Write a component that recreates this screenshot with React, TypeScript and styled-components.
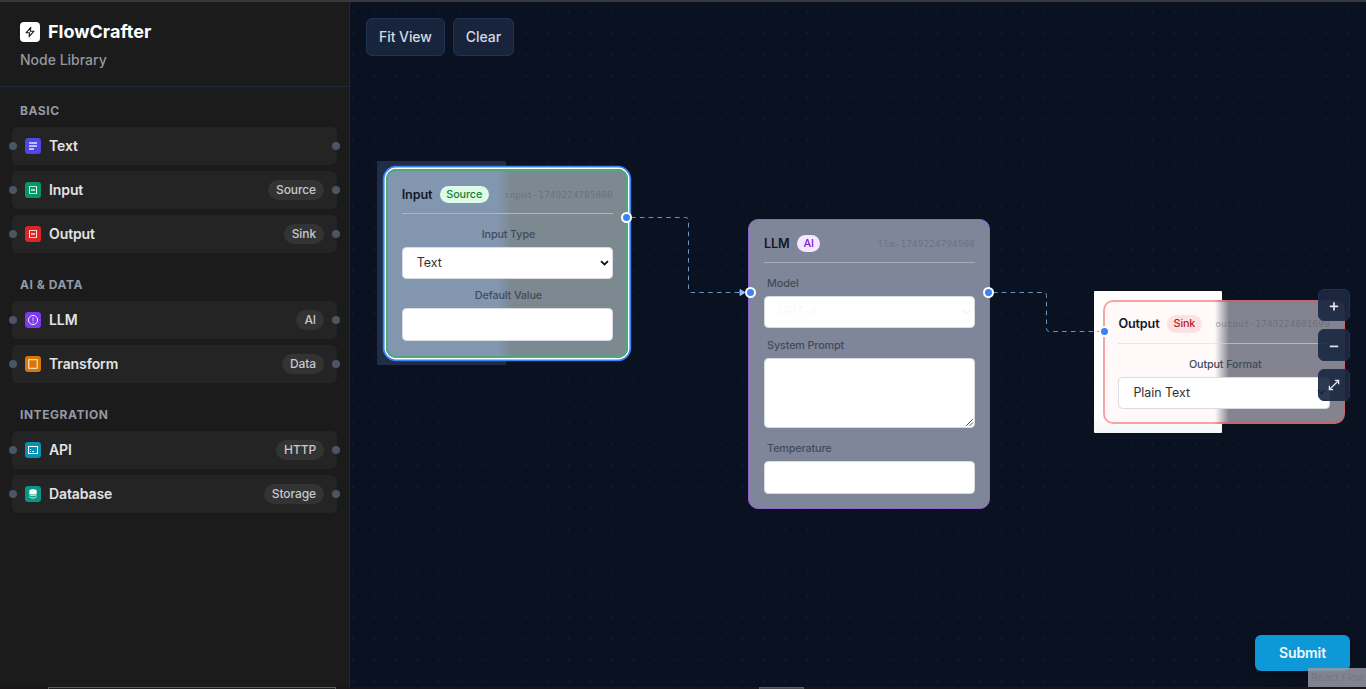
import React from 'react';
import styled, { createGlobalStyle, css } from 'styled-components';

const GlobalStyle = createGlobalStyle`
  * { box-sizing: border-box; }
  body { margin: 0; background: #0a1120; font-family: Inter, "Liberation Sans", sans-serif; overflow: hidden; }
`;

const Page = styled.div`
  position: relative;
  display: flex;
  height: 689px;
  width: 1366px;
  overflow: hidden;
  border-top: 2px solid #38373c;
`;

const Sidebar = styled.aside`
  width: 350px;
  flex: none;
  background: #1b1b1b;
  border-right: 1px solid #1e293b;
`;

const Brand = styled.header`
  height: 85px;
  padding: 20px 20px 0;
  border-bottom: 1px solid #1e293b;
`;

const BrandRow = styled.div`
  display: flex;
  align-items: center;
  gap: 8px;
  height: 20px;
`;

const Logo = styled.span`
  display: grid;
  place-items: center;
  width: 20px;
  height: 20px;
  border-radius: 4px;
  background: #fff;
`;

const Title = styled.h1`
  margin: 0;
  color: #fff;
  font-size: 18px;
  font-weight: 700;
  line-height: 20px;
`;

const Subtitle = styled.div`
  margin-top: 8px;
  color: #94979f;
  font-size: 14px;
  font-weight: 500;
  line-height: 20px;
`;

const Group = styled.section`
  padding: 14px 12px 0;
  & + & { padding-top: 22px; }
`;

const GroupTitle = styled.h2`
  margin: 0 0 6px 8px;
  color: #9499a4;
  font-size: 12px;
  font-weight: 700;
  line-height: 20px;
  letter-spacing: 0.55px;
`;

const Item = styled.div`
  position: relative;
  display: flex;
  align-items: center;
  height: 38px;
  padding: 0 13px;
  border-radius: 6px;
  background: #242424;
  & + & { margin-top: 6px; }
  &::before, &::after {
    content: '';
    position: absolute;
    top: 15px;
    width: 8px;
    height: 8px;
    border-radius: 50%;
    background: #4b5563;
  }
  &::before { left: -3px; }
  &::after { right: -3px; }
`;

const ItemIcon = styled.span<{ $color: string }>`
  width: 16px;
  height: 16px;
  border-radius: 3px;
  background: ${(p) => p.$color};
  svg { display: block; }
`;

const ItemName = styled.span`
  flex: 1;
  margin-left: 8px;
  padding-bottom: 2px;
  color: #e3e3e5;
  font-size: 14px;
  font-weight: 600;
  letter-spacing: -0.1px;
`;

const Tag = styled.span`
  padding: 0 8px;
  border-radius: 10px;
  background: #333;
  color: #c6c8cc;
  font-size: 12px;
  font-weight: 500;
  line-height: 20px;
  letter-spacing: -0.1px;
`;

const Canvas = styled.main`
  position: relative;
  flex: 1;
  background-color: #0a1120;
  background-image: radial-gradient(circle at 50% 50%, #122032 0.6px, transparent 1px);
  background-size: 21.63px 21.63px;
  background-position: -8px -1.6px;
`;

const Toolbar = styled.div`
  display: flex;
  gap: 8px;
  padding: 16px;
`;

const ToolButton = styled.button`
  height: 38px;
  padding: 0 12px 2px;
  border: 1px solid #213354;
  border-radius: 6px;
  background: #18243c;
  color: #d5d9e0;
  font: 500 14px Inter, sans-serif;
  letter-spacing: -0.06px;
`;

const Edges = styled.svg`
  position: absolute;
  left: 0;
  top: 0;
`;

const SelectionBlock = styled.div<{ $x: number; $y: number; $w: number; $h: number; $light?: boolean }>`
  position: absolute;
  left: ${(p) => p.$x}px;
  top: ${(p) => p.$y}px;
  width: ${(p) => p.$w}px;
  height: ${(p) => p.$h}px;
  border-radius: 1px;
  background: ${(p) => (p.$light ? 'linear-gradient(#fff 85%, #f7f6f6)' : '#1f2d49')};
`;

type Tone = 'input' | 'llm' | 'output';

const tones = {
  input: css`
    padding: 12.5px 13.5px;
    border: 2px solid #4bab7c;
    background: linear-gradient(90deg, #8296b0 0 112px, #7c8991 126px) border-box;
    box-shadow: 0 0 0 1.4px #fff, 0 0 0 3.2px #3b82f6;
  `,
  llm: css`
    padding: 12px 14.5px;
    border: 1.4px solid #9061cf;
    background: #808699;
  `,
  output: css`
    padding: 10.5px 13.4px;
    border: 2px solid transparent;
    background:
      linear-gradient(90deg, #fff9f9 0 110px, #83848f 124px) padding-box,
      linear-gradient(90deg, #f8a3a3 0 110px, #c3666d 124px) border-box;
  `,
};

const Card = styled.article<{ $x: number; $y: number; $h: number; $tone: Tone }>`
  position: absolute;
  left: ${(p) => p.$x}px;
  top: ${(p) => p.$y}px;
  width: 242px;
  height: ${(p) => p.$h}px;
  border-radius: 10px;
  ${(p) => tones[p.$tone]}
`;

const CardHead = styled.div<{ $line: string }>`
  display: flex;
  align-items: center;
  height: 31px;
  padding-bottom: 7.5px;
  margin-bottom: 14px;
  border-bottom: 1px solid ${(p) => p.$line};
`;

const CardName = styled.span`
  color: #111827;
  font-size: 12.6px;
  font-weight: 600;
  letter-spacing: -0.12px;
`;

const badgeColors = {
  input: ['#dcfce7', '#15803d'],
  llm: ['#f3e8ff', '#7e22ce'],
  output: ['#fee2e2', '#b91c1c'],
};

const Badge = styled.span<{ $tone: Tone }>`
  margin-left: 7.5px;
  padding: 0 6.5px;
  border-radius: 9px;
  background: ${(p) => badgeColors[p.$tone][0]};
  color: ${(p) => badgeColors[p.$tone][1]};
  font-size: 10.8px;
  font-weight: 500;
  line-height: 17.5px;
  letter-spacing: -0.12px;
`;

const NodeId = styled.span`
  margin-left: auto;
  color: rgba(85, 92, 108, 0.5);
  font: 9.5px "DejaVu Sans Mono", monospace;
  white-space: nowrap;
`;

const Label = styled.label<{ $center?: boolean }>`
  display: block;
  height: 14px;
  margin-bottom: 5px;
  padding-left: ${(p) => (p.$center ? 2.5 : 3.2)}px;
  color: #3f4b5c;
  font-size: 10.8px;
  font-weight: 500;
  line-height: 14px;
  letter-spacing: -0.13px;
  text-align: ${(p) => (p.$center ? 'center' : 'left')};
`;

const Field = styled.div<{ $h: number; $gap?: number; $faint?: boolean }>`
  display: flex;
  align-items: center;
  justify-content: space-between;
  position: relative;
  height: ${(p) => p.$h}px;
  margin-bottom: ${(p) => p.$gap ?? 0}px;
  padding: 0 3px 1px 14px;
  border: 1px solid #d9dde3;
  border-radius: 4.5px;
  background: #fff;
  color: ${(p) => (p.$faint ? '#f8fafc' : '#303030')};
  font-size: 12.4px;
`;

const Grip = styled.svg`
  position: absolute;
  right: 0;
  bottom: 0;
`;

const Handle = styled.span<{ $x: number; $y: number }>`
  position: absolute;
  left: ${(p) => p.$x - 5.5}px;
  top: ${(p) => p.$y - 5.5}px;
  width: 11px;
  height: 11px;
  border: 2px solid #fff;
  border-radius: 50%;
  background: #3b82f6;
`;

const Controls = styled.div`
  position: absolute;
  right: 16px;
  top: 287px;
  display: flex;
  flex-direction: column;
  gap: 8px;
`;

const ControlButton = styled.button`
  display: grid;
  place-items: center;
  width: 32px;
  height: 32px;
  padding: 0;
  border: 1px solid #213250;
  border-radius: 6px;
  background: rgba(27, 40, 65, 0.92);
  color: #e5e7eb;
`;

const Submit = styled.button`
  position: absolute;
  right: 16px;
  bottom: 18px;
  width: 95px;
  height: 36px;
  padding: 0 0 2px;
  border: 0;
  border-radius: 6px;
  background: #0f98d8;
  color: #f1f8fc;
  font: 600 14px Inter, sans-serif;
  letter-spacing: -0.1px;
  box-shadow: 0 3px 8px rgba(0, 0, 0, 0.3);
`;

const Attribution = styled.span`
  position: absolute;
  right: 0;
  bottom: 2px;
  width: 58px;
  height: 19px;
  padding-left: 3px;
  background: rgba(150, 153, 165, 0.85);
  color: #74777f;
  font-size: 10.4px;
  line-height: 19px;
  white-space: nowrap;
`;

const BottomEdge = styled.div`
  position: absolute;
  left: 0;
  right: 0;
  bottom: 0;
  height: 2px;
  background: #1c1518;
`;

const BottomPiece = styled.div<{ $x: number; $w: number; $solid?: boolean }>`
  position: absolute;
  left: ${(p) => p.$x}px;
  top: 0;
  width: ${(p) => p.$w}px;
  height: 2px;
  border: 1px solid #5a5a5a;
  border-bottom: 0;
  background: ${(p) => (p.$solid ? '#48484c' : '#1d1d1d')};
`;

type IconKind = 'text' | 'box' | 'llm' | 'square' | 'api' | 'db';

const Glyph = ({ kind }: { kind: IconKind }) => (
  <svg width="16" height="16" viewBox="0 0 16 16" fill="none" stroke="#fff">
    {kind === 'text' && (
      <g stroke="none" fill="#fff" fillOpacity=".65">
        <rect x="4" y="4" width="8" height="2" />
        <rect x="4" y="7" width="8" height="2" />
        <rect x="4" y="10" width="5" height="2" />
      </g>
    )}
    {kind === 'box' && (
      <>
        <path d="M4 4.500h8M4 11.500h8" strokeOpacity=".75" />
        <path d="M4.500 5v6M11.500 5v6" strokeOpacity=".9" />
        <rect x="6" y="7" width="4" height="2" stroke="none" fill="#fff" fillOpacity=".65" />
      </>
    )}
    {kind === 'llm' && (
      <>
        <circle cx="8" cy="8" r="4.6" strokeOpacity=".9" />
        <path d="M8 5.300v3.700M8 9.900v1.100" strokeOpacity=".7" />
      </>
    )}
    {kind === 'square' && <rect x="3.7" y="3.7" width="8.600" height="8.600" rx=".7" strokeWidth="1.300" strokeOpacity=".72" />}
    {kind === 'api' && (
      <>
        <rect x="3.500" y="4.500" width="9" height="7" />
        <path d="M5 7.500h1M5 9.500h1M7 9.500h2" />
      </>
    )}
    {kind === 'db' && (
      <>
        <path d="M4.300 4.700C4.300 2.700 11.700 2.700 11.700 4.700V7.500C11.700 8.900 4.300 8.900 4.300 7.500z" fill="#fff" stroke="none" />
        <path d="M4.600 8.700c.6 1.300 6.200 1.300 6.800 0M4.600 10.700c.6 1.900 6.200 1.900 6.800 0" strokeOpacity=".85" strokeWidth=".9" />
        <path d="M4.600 8.500v2.500M11.400 8.500v2.500" strokeOpacity=".45" strokeWidth=".7" />
      </>
    )}
  </svg>
);

const Chevron = ({ color = '#111' }: { color?: string }) => (
  <svg width="9" height="8" viewBox="0 0 9 8" fill="none" stroke={color} strokeWidth="1.8">
    <path d="M1 2.100l3.500 3.300L8 2.100" />
  </svg>
);

type Entry = { name: string; tag?: string; color: string; icon: IconKind };

const groups: { title: string; items: Entry[] }[] = [
  {
    title: 'BASIC',
    items: [
      { name: 'Text', color: '#4f46e5', icon: 'text' },
      { name: 'Input', tag: 'Source', color: '#059669', icon: 'box' },
      { name: 'Output', tag: 'Sink', color: '#dc2626', icon: 'box' },
    ],
  },
  {
    title: 'AI & DATA',
    items: [
      { name: 'LLM', tag: 'AI', color: '#7c3aed', icon: 'llm' },
      { name: 'Transform', tag: 'Data', color: '#d97706', icon: 'square' },
    ],
  },
  {
    title: 'INTEGRATION',
    items: [
      { name: 'API', tag: 'HTTP', color: '#0891b2', icon: 'api' },
      { name: 'Database', tag: 'Storage', color: '#0d9488', icon: 'db' },
    ],
  },
];

export default function App() {
  return (
    <>
      <GlobalStyle />
      <Page>
        <Sidebar>
          <Brand>
            <BrandRow>
              <Logo>
                <svg width="10" height="12" viewBox="0 0 10 12" fill="none" stroke="#1b1b1b" strokeWidth="1.1" strokeLinejoin="round">
                  <path d="M5.8 1.3L1 6.8h3.6l-.5 3.9L9 5.2H5.3z" />
                </svg>
              </Logo>
              <Title>FlowCrafter</Title>
            </BrandRow>
            <Subtitle>Node Library</Subtitle>
          </Brand>
          {groups.map((g) => (
            <Group key={g.title}>
              <GroupTitle>{g.title}</GroupTitle>
              {g.items.map((it) => (
                <Item key={it.name}>
                  <ItemIcon $color={it.color}>
                    <Glyph kind={it.icon} />
                  </ItemIcon>
                  <ItemName>{it.name}</ItemName>
                  {it.tag && <Tag>{it.tag}</Tag>}
                </Item>
              ))}
            </Group>
          ))}
        </Sidebar>
        <Canvas>
          <Toolbar>
            <ToolButton>Fit View</ToolButton>
            <ToolButton>Clear</ToolButton>
          </Toolbar>

          <SelectionBlock $x={27} $y={159} $w={129} $h={204} />
          <SelectionBlock $x={744} $y={289} $w={128} $h={142} $light />

          <Edges width="1016" height="687" fill="none" stroke="#6797c6" strokeDasharray="4.600 4.200">
            <path d="M281 215.500H335.500q3 0 3 3V287.500q0 3 3 3H392" />
            <path d="M643 290.500H693.500q3 0 3 3V326.500q0 3 3 3H750" />
            <path d="M390 287.500l5 3-5 3z" fill="#8ec1f8" stroke="#8ec1f8" strokeDasharray="none" />
          </Edges>

          <Card $x={36.2} $y={166.6} $h={189} $tone="input">
            <CardHead $line="#adb6c2">
              <CardName>Input</CardName>
              <Badge $tone="input">Source</Badge>
              <NodeId>input-1749224785880</NodeId>
            </CardHead>
            <Label $center>Input Type</Label>
            <Field $h={32} $gap={10}>
              Text
              <Chevron />
            </Field>
            <Label $center>Default Value</Label>
            <Field $h={33} />
          </Card>

          <Card $x={398.4} $y={217.2} $h={290} $tone="llm">
            <CardHead $line="#a9adba">
              <CardName>LLM</CardName>
              <Badge $tone="llm">AI</Badge>
              <NodeId>llm-1749224794908</NodeId>
            </CardHead>
            <Label>Model</Label>
            <Field $h={32} $gap={10.5} $faint>
              GPT-4
              <Chevron color="#f3f5f7" />
            </Field>
            <Label>System Prompt</Label>
            <Field $h={70} $gap={14.5}>
              <Grip width="9" height="9" viewBox="0 0 9 9" stroke="#555" strokeWidth="1">
                <path d="M1 8L8 1M4.500 8L8 4.500" />
              </Grip>
            </Field>
            <Label>Temperature</Label>
            <Field $h={33} />
          </Card>

          <Card $x={753} $y={298} $h={124} $tone="output">
            <CardHead $line="rgba(214, 216, 224, 0.6)">
              <CardName>Output</CardName>
              <Badge $tone="output">Sink</Badge>
              <NodeId>output-1749224801699</NodeId>
            </CardHead>
            <Label $center>Output Format</Label>
            <Field $h={32}>
              Plain Text
              <Chevron />
            </Field>
          </Card>

          <Handle $x={276.5} $y={215.2} />
          <Handle $x={400.1} $y={290.5} />
          <Handle $x={638.4} $y={290.5} />
          <Handle $x={754.5} $y={329.8} />

          <Controls>
            <ControlButton>
              <svg width="10" height="12" viewBox="0 0 10 12" fill="none" stroke="currentColor" strokeWidth="1.7">
                <path d="M5 3.200v8.300M.8 7.400h8.400" />
              </svg>
            </ControlButton>
            <ControlButton>
              <svg width="10" height="12" viewBox="0 0 10 12" fill="none" stroke="currentColor" strokeWidth="1.7">
                <path d="M.8 7.400h8.400" />
              </svg>
            </ControlButton>
            <ControlButton>
              <svg width="12" height="12" viewBox="0 0 12 12" fill="none" stroke="currentColor" strokeWidth="1.3">
                <path d="M1.500 10.500l9-9M6.800 1.400h3.800v3.800M1.400 6.800v3.800h3.800" />
              </svg>
            </ControlButton>
          </Controls>
          <Submit>Submit</Submit>
          <Attribution>React Flow</Attribution>
        </Canvas>
        <BottomEdge>
          <BottomPiece $x={48} $w={288} />
          <BottomPiece $x={759} $w={45} $solid />
        </BottomEdge>
      </Page>
    </>
  );
}
